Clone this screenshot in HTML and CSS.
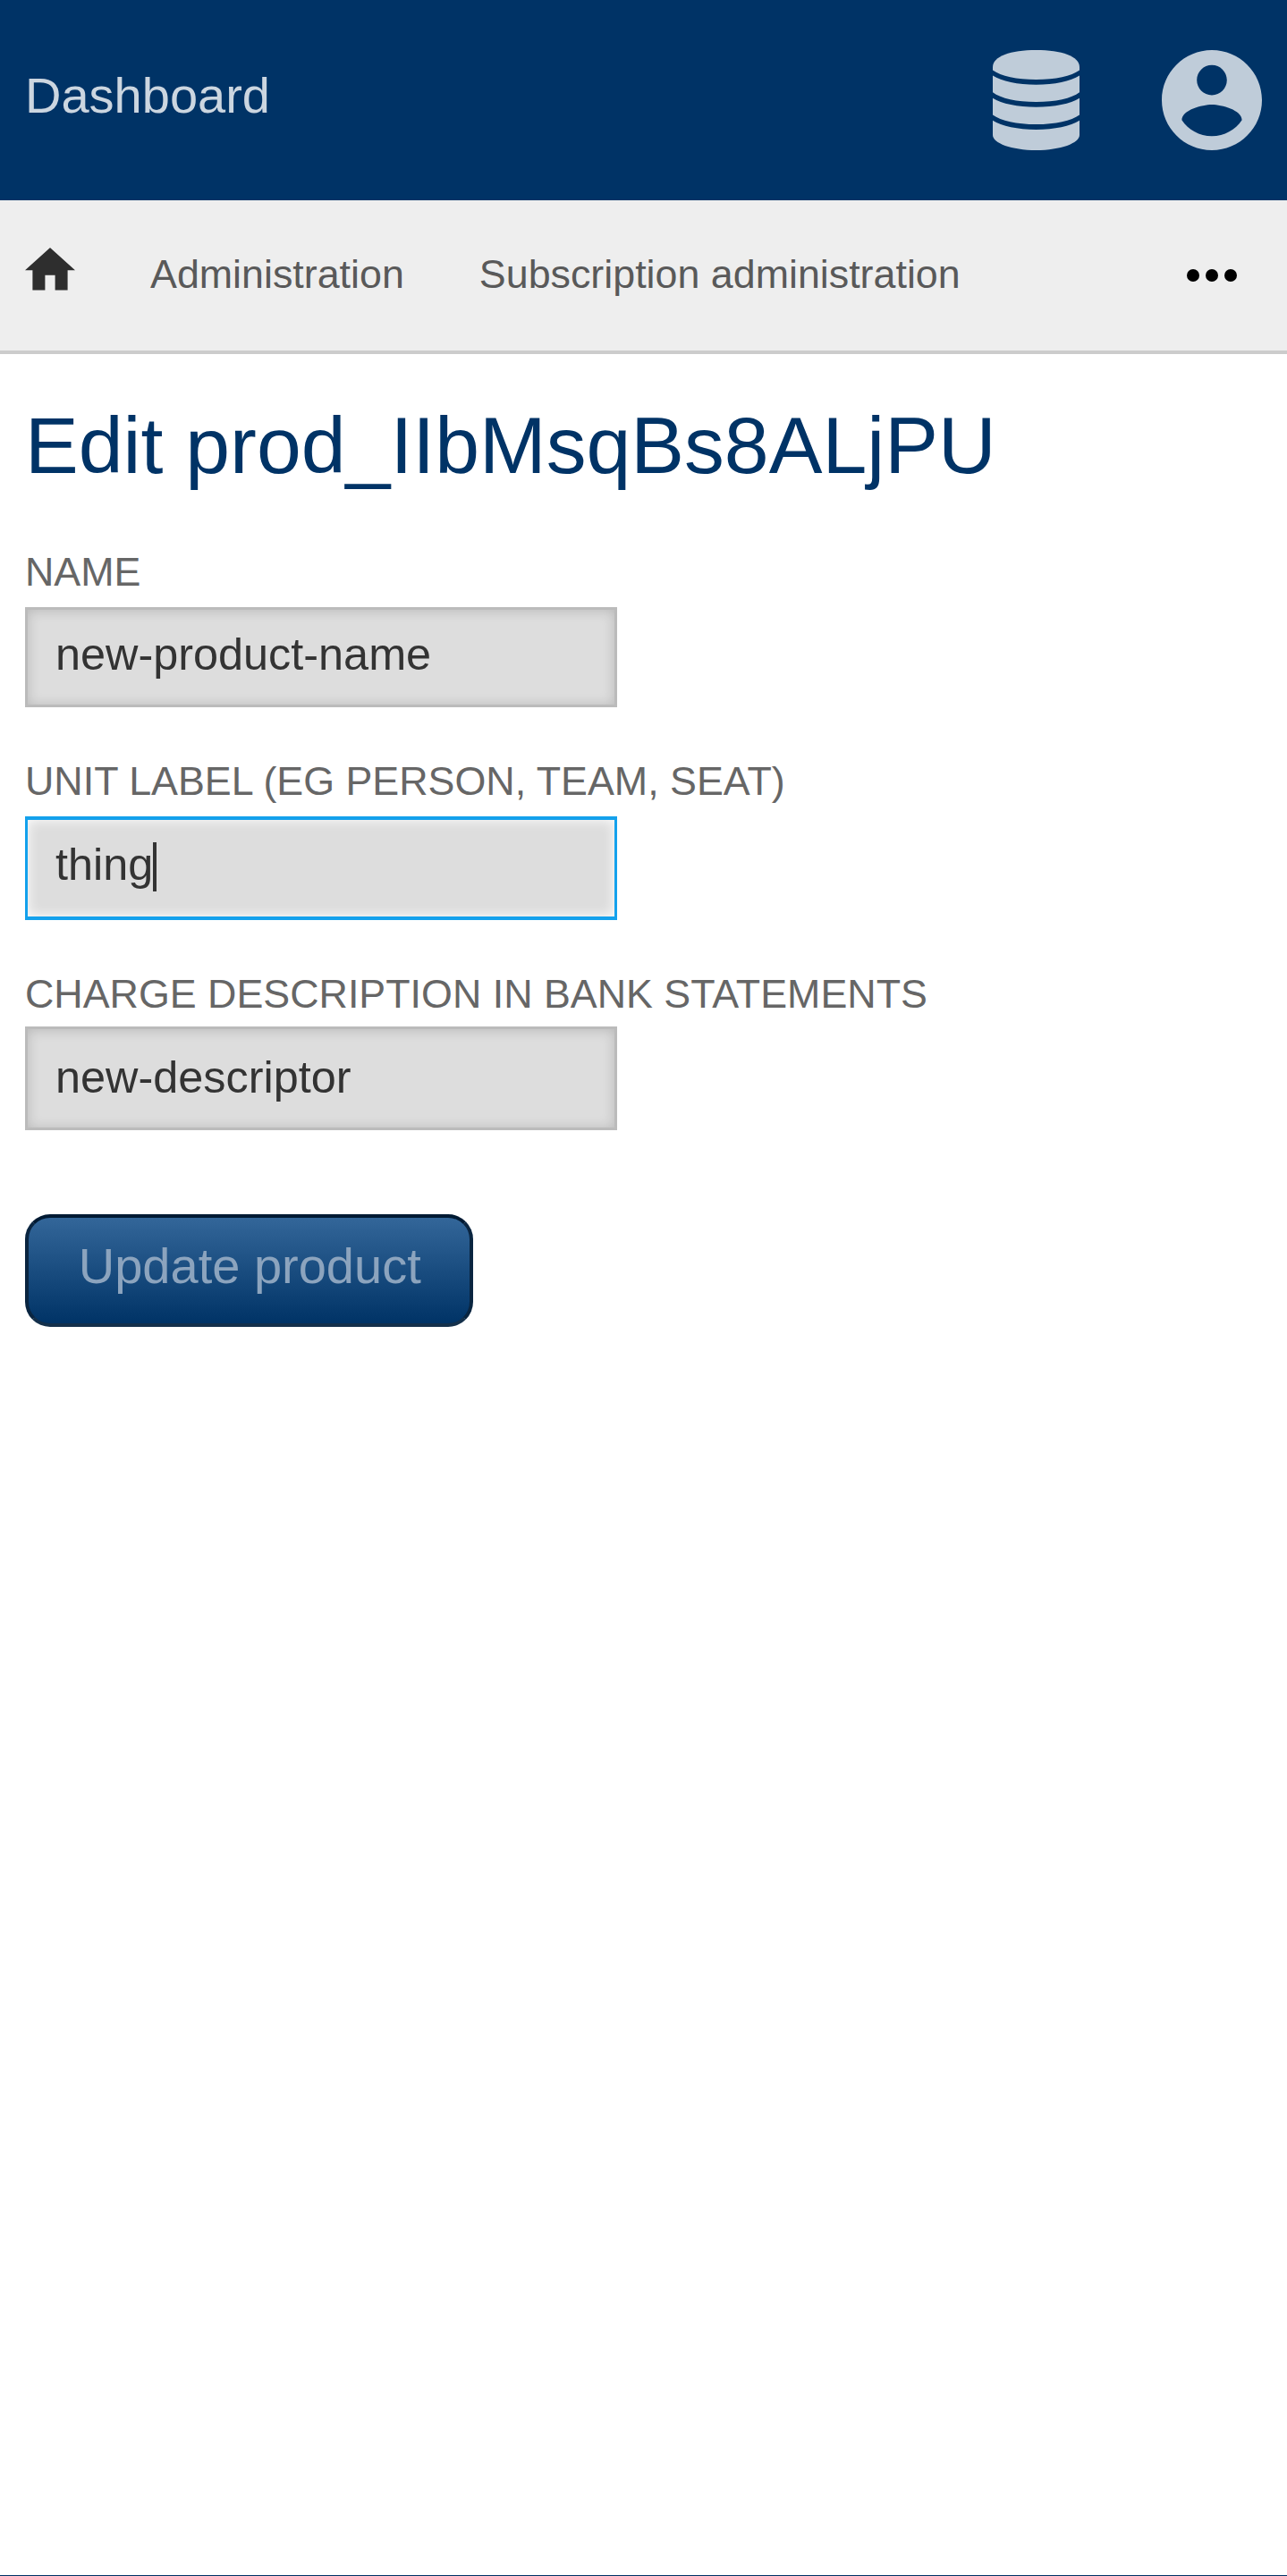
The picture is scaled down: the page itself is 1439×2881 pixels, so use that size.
FILE: index.html
```html
<!DOCTYPE html>
<html lang="en">
<head>
<meta charset="utf-8">
<title>Dashboard</title>
<link rel="stylesheet" href="styles.css">
</head>
<body>
<header class="header">
  <a class="brand">Dashboard</a>
  <div class="menus">
    <svg class="icon-database" viewBox="0 0 97 112">
      <path d="M0 19C0 7 20 0 48.5 0S97 7 97 19v3.500C88 29 70 33 48.500 33S9 29 0 22.500z"/>
      <path d="M0 28.500C10 35 28 38.700 48.500 38.700S87 35 97 28.500v18.700C88 54 70 58 48.500 58S9 54 0 47.200z"/>
      <path d="M0 53.700C10 60 28 63.700 48.500 63.700S87 60 97 53.700v18.700C88 79 70 83 48.500 83S9 79 0 72.400z"/>
      <path d="M0 78.800C10 85 28 88.900 48.500 88.900S87 85 97 78.800V95C97 104 76 112 48.500 112S0 104 0 95z"/>
    </svg>
    <svg class="icon-account" viewBox="2 2 20 20">
      <path d="M12 2C6.480 2 2 6.480 2 12s4.480 10 10 10 10-4.480 10-10S17.520 2 12 2zm0 3c1.660 0 3 1.340 3 3s-1.340 3-3 3-3-1.340-3-3 1.340-3 3-3zm0 14.200c-2.500 0-4.710-1.280-6-3.220.03-1.990 4-3.080 6-3.080 1.990 0 5.970 1.090 6 3.080-1.290 1.940-3.500 3.220-6 3.220z"/>
    </svg>
  </div>
</header>
<nav class="navbar">
  <svg class="icon-home" viewBox="2 3 20 17"><path d="M10 20v-6h4v6h5v-8h3L12 3 2 12h3v8z"/></svg>
  <a class="nav-link">Administration</a>
  <a class="nav-link">Subscription administration</a>
  <svg class="icon-more" viewBox="4 10 16 4"><circle cx="6" cy="12" r="2"/><circle cx="12" cy="12" r="2"/><circle cx="18" cy="12" r="2"/></svg>
</nav>
<main class="content">
  <h1 class="title">Edit prod_IIbMsqBs8ALjPU</h1>
  <form class="form">
    <div class="field field-name">
      <label class="label" for="name">Name</label>
      <input class="input" id="name" value="new-product-name">
    </div>
    <div class="field field-unit">
      <label class="label" for="unit">Unit label (eg person, team, seat)</label>
      <div class="input-wrap">
        <input class="input input-active" id="unit" value="thing">
        <span class="caret"></span>
      </div>
    </div>
    <div class="field field-descriptor">
      <label class="label" for="descriptor">Charge description in bank statements</label>
      <input class="input" id="descriptor" value="new-descriptor">
    </div>
    <button class="button" type="button">Update product</button>
  </form>
</main>
</body>
</html>
```
FILE: styles.css
```css
* { box-sizing: border-box; }

body {
  margin: 0;
  min-height: 2881px;
  display: flex;
  flex-direction: column;
  background: #fff;
  border-bottom: 1px solid #036;
  font-family: "Liberation Sans", Arial, sans-serif;
}

svg { display: block; flex: none; }

.header {
  height: 224px;
  padding: 0 28.500px 0 28px;
  display: flex;
  align-items: center;
  justify-content: space-between;
  background: #036;
}
.brand {
  padding-bottom: 11px;
  font-size: 56px;
  line-height: 64px;
  color: #ccd6e0;
}
.menus { display: flex; gap: 91.500px; fill: #bfccd9; }
.icon-database { width: 97px; height: 112px; }
.icon-account { width: 112px; height: 112px; }

.navbar {
  height: 172px;
  padding: 0 56.500px 0 28px;
  display: flex;
  align-items: center;
  gap: 84px;
  background: #eee;
  border-bottom: 4px solid #ccc;
}
.icon-home {
  width: 56px;
  height: 47.6px;
  margin-bottom: 14px;
  fill: #2e2e2e;
}
.nav-link {
  padding-bottom: 5px;
  font-size: 44.8px;
  line-height: 52px;
  color: #595959;
}
.icon-more { width: 56px; height: 14px; margin-left: auto; }

.content { padding: 50px 28px 0; }
.title {
  margin: 0 0 63px;
  font-size: 89.6px;
  font-weight: 400;
  line-height: 104px;
  color: #036;
}

.form {
  display: flex;
  flex-direction: column;
  align-items: flex-start;
}
.field { display: flex; flex-direction: column; }
.label {
  margin-bottom: 14px;
  font-size: 44.8px;
  line-height: 52px;
  color: #666;
  text-transform: uppercase;
}
.input {
  display: block;
  width: 662px;
  height: 116px;
  margin: 0;
  padding: 0 31px 4px;
  border: 3.500px solid #bbb;
  border-radius: 0;
  background: #ddd;
  box-shadow: inset 0 1px 14px rgba(0, 0, 0, 0.17);
  font: 50.4px "Liberation Sans", Arial, sans-serif;
  color: #333;
  outline: none;
}
.field-name { margin-bottom: 56px; }
.field-name .input { height: 112px; padding-bottom: 7px; }
.field-unit { margin-bottom: 56px; }
.field-descriptor { margin-bottom: 94px; }
.field-descriptor .label { margin-bottom: 11px; }

.input-wrap { position: relative; }
.input-active {
  padding-bottom: 9px;
  border-width: 4px 3px;
  border-color: #14a1ec;
  box-shadow: inset 0 0 14px #fff;
}
.caret {
  position: absolute;
  left: 143px;
  top: 29px;
  width: 4px;
  height: 55px;
  background: #333;
}

.button {
  width: 500.500px;
  height: 126px;
  padding: 0 0 11px 2px;
  border: 4px solid;
  border-color: #001a33 #0a2540 #14304b;
  border-radius: 28px;
  background: linear-gradient(#369, #036);
  font: 56px "Liberation Sans", Arial, sans-serif;
  color: #8ca4be;
}
```
